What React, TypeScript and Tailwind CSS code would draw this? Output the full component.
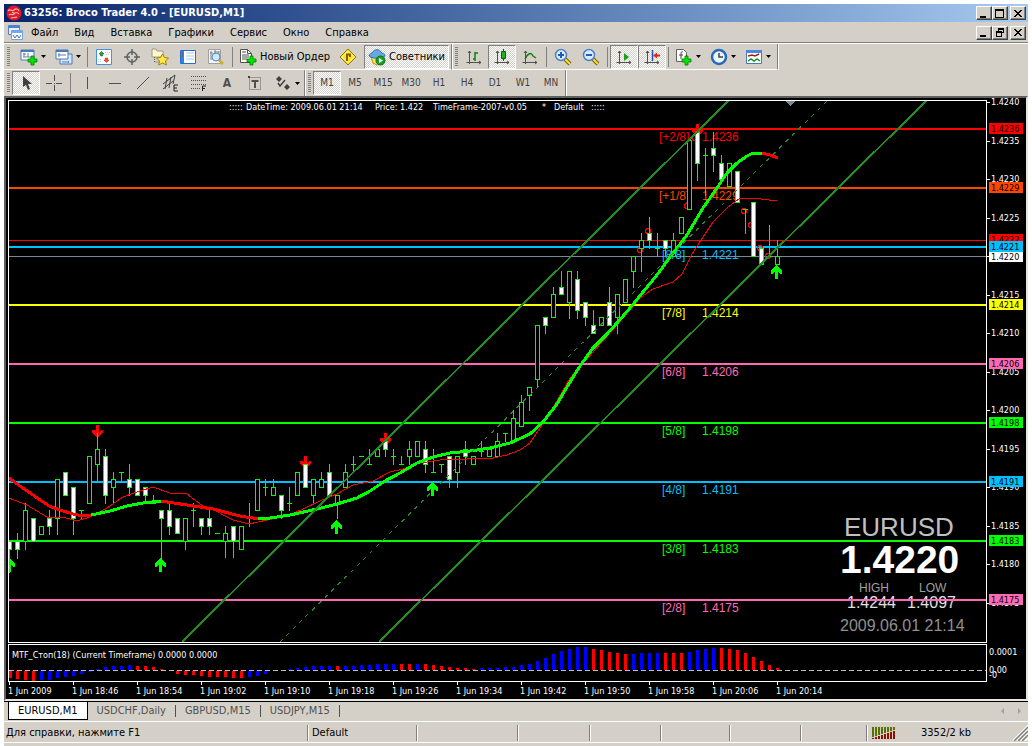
import { ReactNode } from "react"

type Candle = [number, number, number, number, number, 'up' | 'down']

type ButtonProps = {
    label: string
    pressed?: boolean
    menu?: boolean
    wide?: boolean
    children: ReactNode
}

// [index, high, body top, body bottom, low, direction]
const candles: Candle[] = [
    [0, 541, 541, 549, 572, 'down'], [1, 533, 541, 549, 558, 'down'], [2, 503, 510, 541, 549, 'up'],
    [3, 518, 518, 541, 541, 'down'], [4, 526, 526, 534, 534, 'up'], [5, 510, 518, 526, 534, 'down'],
    [6, 479, 479, 518, 534, 'up'], [7, 472, 472, 495, 495, 'down'], [8, 487, 487, 518, 534, 'down'],
    [9, 510, 510, 510, 518, 'up'], [10, 456, 456, 503, 503, 'up'], [11, 433, 449, 464, 480, 'up'],
    [12, 449, 456, 495, 503, 'down'], [13, 472, 479, 487, 503, 'up'], [14, 472, 472, 472, 480, 'up'],
    [15, 464, 479, 487, 495, 'down'], [16, 479, 479, 495, 495, 'down'], [17, 487, 487, 495, 501, 'down'],
    [18, 495, 503, 503, 503, 'up'], [19, 510, 510, 518, 564, 'down'], [20, 503, 510, 526, 534, 'down'],
    [21, 518, 518, 533, 533, 'down'], [22, 518, 518, 541, 549, 'up'], [23, 503, 510, 510, 526, 'up'],
    [24, 518, 518, 526, 534, 'down'], [25, 510, 518, 526, 534, 'down'], [26, 533, 533, 533, 533, 'up'],
    [27, 526, 533, 541, 557, 'up'], [28, 526, 526, 541, 557, 'down'], [29, 526, 526, 549, 549, 'up'],
    [30, 503, 518, 518, 526, 'up'], [31, 479, 479, 510, 510, 'up'], [32, 479, 487, 487, 495, 'up'],
    [33, 479, 487, 495, 495, 'up'], [34, 495, 495, 510, 518, 'down'], [35, 487, 503, 503, 510, 'up'],
    [36, 472, 472, 495, 495, 'up'], [37, 464, 464, 487, 487, 'down'], [38, 479, 479, 495, 503, 'up'],
    [39, 472, 479, 487, 487, 'up'], [40, 464, 472, 495, 495, 'down'], [41, 495, 495, 503, 518, 'up'],
    [42, 464, 472, 487, 487, 'up'], [43, 456, 464, 464, 472, 'up'], [44, 456, 456, 456, 456, 'up'],
    [45, 449, 464, 464, 464, 'up'], [46, 449, 449, 456, 456, 'up'], [47, 441, 441, 449, 456, 'down'],
    [48, 449, 456, 456, 464, 'up'], [49, 456, 464, 464, 464, 'up'], [50, 441, 449, 456, 464, 'up'],
    [51, 441, 441, 456, 456, 'up'], [52, 441, 449, 464, 472, 'down'], [53, 449, 472, 472, 472, 'up'],
    [54, 464, 464, 464, 472, 'up'], [55, 456, 456, 479, 487, 'down'], [56, 456, 456, 472, 487, 'up'],
    [57, 441, 449, 456, 464, 'down'], [58, 456, 456, 464, 464, 'up'], [59, 441, 451, 451, 456, 'up'],
    [60, 449, 449, 456, 456, 'up'], [61, 433, 441, 456, 456, 'up'], [62, 433, 433, 433, 441, 'up'],
    [63, 410, 418, 441, 441, 'up'], [64, 395, 402, 426, 426, 'up'], [65, 387, 387, 395, 410, 'up'],
    [66, 325, 325, 379, 387, 'up'], [67, 317, 317, 325, 333, 'down'], [68, 287, 294, 317, 317, 'up'],
    [69, 271, 287, 294, 294, 'down'], [70, 271, 271, 302, 318, 'up'], [71, 271, 279, 310, 318, 'down'],
    [72, 302, 302, 317, 325, 'down'], [73, 310, 325, 333, 333, 'down'], [74, 317, 317, 325, 325, 'up'],
    [75, 287, 302, 325, 325, 'down'], [76, 294, 294, 317, 333, 'up'], [77, 279, 279, 302, 302, 'up'],
    [78, 256, 256, 271, 287, 'up'], [79, 233, 240, 248, 271, 'up'], [80, 217, 233, 240, 248, 'down'],
    [81, 233, 248, 248, 256, 'up'], [82, 240, 240, 248, 256, 'down'], [83, 233, 240, 256, 256, 'up'],
    [84, 217, 217, 233, 233, 'up'], [85, 140, 140, 209, 209, 'up'], [86, 132, 132, 163, 180, 'down'],
    [87, 148, 155, 155, 195, 'up'], [88, 132, 148, 155, 171, 'down'], [89, 155, 163, 179, 179, 'down'],
    [90, 163, 163, 186, 186, 'up'], [91, 171, 171, 202, 202, 'down'], [92, 209, 209, 209, 233, 'up'],
    [93, 202, 202, 256, 256, 'down'], [94, 248, 248, 264, 264, 'down'], [95, 225, 256, 256, 256, 'up'],
    [96, 240, 256, 264, 264, 'up'],
]

// histogram, grouped in runs of one colour
const histogram: { start: number, color: string, values: number[] }[] = [
    { start: 0, color: '#ff0000', values: [-7, -8, -9, -10] },
    { start: 4, color: '#0000ff', values: [-9, -9, -7, -6, -5, -3, -1, 1, 3, 4, 4, 5] },
    { start: 16, color: '#ff0000', values: [4, 4, 3, 1, 0, -3, -4, -4, -5, -6, -6, -6, -7, -7] },
    { start: 30, color: '#0000ff', values: [-6, -5, -3, 0, 0, 1, 2, 3, 4, 4, 4] },
    { start: 41, color: '#ff0000', values: [4] },
    { start: 42, color: '#0000ff', values: [4, 4, 5, 5, 6, 6, 6] },
    { start: 49, color: '#ff0000', values: [6, 6] },
    { start: 51, color: '#0000ff', values: [6] },
    { start: 52, color: '#ff0000', values: [6, 5, 4, 3, 2, 2, 1] },
    { start: 59, color: '#0000ff', values: [2, 2, 2, 3, 3, 5, 6, 9, 12, 16, 19, 21, 23, 23] },
    { start: 73, color: '#ff0000', values: [21, 20, 18, 17, 16] },
    { start: 78, color: '#0000ff', values: [16, 17, 17, 17] },
    { start: 82, color: '#ff0000', values: [17, 17, 17] },
    { start: 85, color: '#0000ff', values: [18, 20, 21, 22] },
    { start: 89, color: '#ff0000', values: [22, 21, 20, 17, 13, 9, 5, 2] },
]

const levels = [
    { y: 129, name: '[+2/8]', price: '1.4236', color: '#ff0000' },
    { y: 188, name: '[+1/8]', price: '1.4229', color: '#ff4500' },
    { y: 247, name: '[8/8]', price: '1.4221', color: '#00bfff' },
    { y: 305, name: '[7/8]', price: '1.4214', color: '#ffff00' },
    { y: 364, name: '[6/8]', price: '1.4206', color: '#ff69b4' },
    { y: 423, name: '[5/8]', price: '1.4198', color: '#00ff00' },
    { y: 482, name: '[4/8]', price: '1.4191', color: '#00bfff' },
    { y: 541, name: '[3/8]', price: '1.4183', color: '#00ff00' },
    { y: 600, name: '[2/8]', price: '1.4175', color: '#ff69b4' },
]

const prices = ['1.4240', '1.4235', '1.4230', '1.4225', '1.4220', '1.4215', '1.4210', '1.4205', '1.4200', '1.4195', '1.4190', '1.4185', '1.4180', '1.4175']

const times = ['2009', '18:46', '18:54', '19:02', '19:10', '19:18', '19:26', '19:34', '19:42', '19:50', '19:58', '20:06', '20:14']

const menuItems = ['Файл', 'Вид', 'Вставка', 'Графики', 'Сервис', 'Окно', 'Справка']
const timeframes = ['M1', 'M5', 'M15', 'M30', 'H1', 'H4', 'D1', 'W1', 'MN']
const tabs = ['EURUSD,M1', 'USDCHF,Daily', 'GBPUSD,M15', 'USDJPY,M15']

const circles = [[648, 231], [640, 250], [744, 211], [751, 225], [687, 206], [760, 248], [768, 256], [695, 138]]

function Grip() {
    return <div className="mx-[2px] h-5 w-[3px] shrink-0 bg-[repeating-linear-gradient(#808080_0_1px,#d4d0c8_1px_2px)]" />
}

function Separator() {
    return <div className="mx-[2px] h-5 w-px shrink-0 bg-[#808080]" />
}

function ToolButton({ label, pressed = false, menu = false, wide = false, children }: ButtonProps) {
    const width = wide ? 'px-[3px]' : menu ? 'w-[35px]' : 'w-7'
    const look = pressed
        ? 'border-t-[#808080] border-l-[#808080] border-r-white border-b-white bg-[conic-gradient(#fff_25%,#d4d0c8_0_50%,#fff_0_75%,#d4d0c8_0)] bg-[length:2px_2px]'
        : 'border-transparent'
    return (
        <button type="button" aria-label={label} className={`flex h-6 shrink-0 items-center justify-center gap-[3px] border whitespace-nowrap ${width} ${look}`}>
            {children}
            {menu && <svg width="5" height="3" viewBox="0 0 5 3"><path d="M0 0h5L2.5 3z" fill="#000" /></svg>}
        </button>
    )
}

function Icon({ children }: { children: ReactNode }) {
    return <svg width="18" height="18" viewBox="0 0 18 18" fill="none" className="shrink-0">{children}</svg>
}

function Plus({ x, y }: { x: number, y: number }) {
    return <path transform={`translate(${x} ${y})`} d="M3 0h3v3h3v3H6v3H3V6H0V3h3z" fill="#00e800" stroke="#007800" strokeWidth=".8" />
}

function Axes() {
    return <path d="M4.500 3v13M1.500 14.500H16M3 5l1.500-2L6 5M14 13l2 1.500-2 1.500" stroke="#505050" />
}

function Magnifier({ sign }: { sign: string }) {
    return (
        <Icon>
            <path d="M11 11l5 5" stroke="#806000" strokeWidth="4" />
            <path d="M11 11l5 5" stroke="#f0e040" strokeWidth="2" />
            <circle cx="7" cy="7" r="5.500" fill="#d8ecff" stroke="#5080c8" strokeWidth="1.500" />
            <path d={sign} stroke="#2858b0" strokeWidth="2" />
        </Icon>
    )
}

function CaptionButton({ label, children }: { label: string, children: ReactNode }) {
    return (
        <button type="button" aria-label={label} className="flex h-[14px] w-4 items-center justify-center border border-t-white border-l-white border-r-[#404040] border-b-[#404040] bg-[#d4d0c8] shadow-[inset_-1px_-1px_#808080]">
            <svg width="10" height="9" viewBox="0 0 10 9" fill="none" shapeRendering="crispEdges">{children}</svg>
        </button>
    )
}

function CaptionButtons({ restore = false }: { restore?: boolean }) {
    return (
        <div className="ml-auto flex pr-[2px]">
            <CaptionButton label="Minimize"><path d="M1 7h6v2H1z" fill="#000" /></CaptionButton>
            <CaptionButton label="Maximize">
                {restore
                    ? <path d="M3.500 3V.500h5v4H7M3 1h6M1.500 3.500h5v5h-5zM1 4h6" stroke="#000" />
                    : <path d="M.500.500h8v8h-8zM0 1.500h9" stroke="#000" />}
            </CaptionButton>
            <div className="w-[2px]" />
            <CaptionButton label="Close"><path d="M1 1l7 7M8 1L1 8M2 1l7 7M9 1L2 8" stroke="#000" /></CaptionButton>
        </div>
    )
}

function TitleBar() {
    return (
        <header className="flex h-[18px] items-center bg-linear-to-r from-[#0a246a] to-[#a6caf0] pl-[2px] text-white">
            <svg width="16" height="16" viewBox="0 0 16 16" fill="none">
                <circle cx="8" cy="8" r="7.500" fill="#e01828" />
                <path d="M2 6c2-3 4 1 6-1s4-1 5 1M3 10c2-2 4 1 5-1s3-2 5 0M5 13c2-1 4 0 6-1M6 7l3 2" stroke="#ffb0b0" strokeWidth="1.200" />
            </svg>
            <h1 className="pl-[2px] leading-4 font-bold whitespace-nowrap">63256: Broco Trader 4.0 - [EURUSD,M1]</h1>
            <CaptionButtons />
        </header>
    )
}

function MenuBar() {
    return (
        <nav className="flex h-[22px] items-center border-b border-b-white pl-1 shadow-[inset_0_-1px_#808080]">
            <svg width="15" height="16" viewBox="0 0 15 16" fill="none">
                <path d="M.500.500h11v9H.500z" fill="#e8f0ff" stroke="#5080d0" />
                <path d="M1 2h10" stroke="#5080d0" strokeWidth="2" />
                <path d="M3.500 5.500h11v9h-11z" fill="#fff" stroke="#78a0e0" />
                <path d="M4 7h10" stroke="#78a8e8" strokeWidth="2" />
                <path d="M5 10l2 3 2-3 2 3 2-3" stroke="#4070c8" />
            </svg>
            {menuItems.map(item => (
                <button key={item} type="button" className="px-2 whitespace-nowrap">{item}</button>
            ))}
            <CaptionButtons restore />
        </nav>
    )
}

function MainToolbar() {
    return (
        <div className="flex h-[26px]">
            <div className="flex items-center border-r border-b border-r-[#808080] border-b-white pl-px">
                <Grip />
                <div className="w-[3px]" />
                <ToolButton label="New chart" menu>
                    <Icon>
                        <path d="M1 2h13v10H1z" fill="#fff" stroke="#4878b8" />
                        <path d="M1 3h13" stroke="#4878b8" strokeWidth="2" />
                        <path d="M4 5v4M3 6h3M8 5v4M3 9h8" stroke="#6080a0" />
                        <Plus x={8} y={8} />
                    </Icon>
                </ToolButton>
                <ToolButton label="Profiles" menu>
                    <Icon>
                        <path d="M5 6h12v10H5z" fill="#d8e8ff" stroke="#4878b8" />
                        <path d="M1 2h12v9H1z" fill="#fff" stroke="#4878b8" />
                        <path d="M1 3h12" stroke="#4878b8" strokeWidth="2" />
                        <path d="M4 5v4M3 7h8M7 14h7M13 13l1 1-1 1" stroke="#6080a0" />
                    </Icon>
                </ToolButton>
                <Separator />
                <ToolButton label="Market watch">
                    <Icon>
                        <path d="M1.500 1.500h15v15h-15z" fill="#fff" stroke="#4890e0" />
                        <path d="M10 4.500h5M11 6.500h4M3 11.500h4M3 13.500h4" stroke="#b0ccf0" strokeDasharray="1 1" />
                        <path d="M6.500 3.500l2.500 2.500H7.500v2h-2V6H4z" fill="#20a030" stroke="#107020" strokeWidth=".6" />
                        <path d="M11.500 14.500L9 12h1.500v-2h2v2H14z" fill="#f06030" stroke="#c02010" strokeWidth=".6" />
                    </Icon>
                </ToolButton>
                <ToolButton label="Data window">
                    <Icon>
                        <circle cx="9" cy="9" r="5" stroke="#606060" strokeWidth="1.500" />
                        <path d="M9 1v6M9 11v6M1 9h6M11 9h6" stroke="#606060" strokeWidth="1.500" />
                    </Icon>
                </ToolButton>
                <ToolButton label="Navigator">
                    <Icon>
                        <path d="M1 1h4l1 2h6v6H1z" fill="#fff8d0" stroke="#a09880" />
                        <path d="M3.500 9v5H8" stroke="#606060" strokeDasharray="1 1" />
                        <path d="M11.500 6l2 3.500 4 .5-3 3 .8 4-3.800-2-3.800 2 .8-4-3-3 4-.5z" fill="#ffe840" stroke="#a08010" />
                    </Icon>
                </ToolButton>
                <ToolButton label="Terminal">
                    <Icon>
                        <path d="M1.500 2.500h15v13h-15z" fill="#fff" stroke="#2070d0" />
                        <path d="M2 3h3v12H2z" fill="#3080e0" />
                        <path d="M3 5h1M3 8h1" stroke="#e02020" />
                        <path d="M7 5h8M7 8h8M7 11h8" stroke="#a8c8f0" />
                    </Icon>
                </ToolButton>
                <ToolButton label="Strategy tester">
                    <Icon>
                        <path d="M1.500 1.500h12v14h-12z" fill="#f4f4f4" stroke="#a0a0a0" />
                        <path d="M4 3v9M3 5h3M8 2v5M7 4h5M12 3v4" stroke="#808080" />
                        <path d="M12 12l4 4" stroke="#d0b020" strokeWidth="2.500" />
                        <circle cx="9" cy="9" r="4" fill="#c8e4ff" fillOpacity=".8" stroke="#5088c8" />
                    </Icon>
                </ToolButton>
                <Separator />
                <ToolButton label="Новый Ордер" wide>
                    <Icon>
                        <path d="M1.500 1.500h7l4 4v9h-11z" fill="#fff" stroke="#505050" />
                        <path d="M8.500 1.500v4h4M3 4h4M3 7h7M3 9h7M3 11h5" stroke="#505050" />
                        <Plus x={8} y={8} />
                    </Icon>
                    <span>Новый Ордер</span>
                </ToolButton>
                <ToolButton label="MetaEditor">
                    <Icon>
                        <path d="M9 1l8 8-8 8-8-8z" fill="#ffe020" stroke="#907800" />
                        <path d="M9 3l6 6-6 6-6-6z" stroke="#fff8a0" />
                        <path d="M8 13V6.500h3V9" stroke="#806000" strokeWidth="2" />
                    </Icon>
                </ToolButton>
                <div className="w-[2px]" />
                <ToolButton label="Советники" wide pressed>
                    <Icon>
                        <path d="M3 9h12l-2 6-4 2-4-2z" fill="#f8e050" stroke="#b09020" />
                        <path d="M1 8c0-3 3-2 4-4 1-3 7-3 8 0 1 2 4 1 4 4-4 3-12 3-16 0z" fill="#68a8e0" stroke="#3070b0" />
                        <circle cx="12.500" cy="12.500" r="4.500" fill="#18a028" stroke="#087018" />
                        <path d="M11 10l4 2.500-4 2.500z" fill="#fff" />
                    </Icon>
                    <span>Советники</span>
                </ToolButton>
                <div className="w-[2px]" />
            </div>
            <div className="flex items-center border-r border-b border-l border-r-[#808080] border-b-white border-l-white pr-px">
                <Grip />
                <ToolButton label="Bar chart"><Icon><Axes /><path d="M10 4v9M8 11h2M10 5h3" stroke="#108010" strokeWidth="1.500" /></Icon></ToolButton>
                <ToolButton label="Candlesticks" pressed>
                    <Icon><Axes /><path d="M10.500 1v12" stroke="#086008" /><path d="M8.500 3.500h4v7h-4z" fill="#20b020" stroke="#086008" /></Icon>
                </ToolButton>
                <ToolButton label="Line chart"><Icon><Axes /><path d="M4 11c3-6 6-7 8-3l3 2" stroke="#108010" strokeWidth="1.500" /></Icon></ToolButton>
                <Separator />
                <ToolButton label="Zoom in"><Magnifier sign="M4 7h6M7 4v6" /></ToolButton>
                <ToolButton label="Zoom out"><Magnifier sign="M4 7h6" /></ToolButton>
                <Separator />
                <ToolButton label="Auto scroll" pressed><Icon><Axes /><path d="M9 5l5 4-5 4z" fill="#18a018" /></Icon></ToolButton>
                <ToolButton label="Chart shift" pressed>
                    <Icon><Axes /><path d="M9.500 2v11" stroke="#2050c0" strokeWidth="1.500" /><path d="M10 7.500l4-3v2h3v2h-3v2z" fill="#e02810" /></Icon>
                </ToolButton>
                <Separator />
                <ToolButton label="Indicators" menu>
                    <Icon>
                        <path d="M1.500 1.500h7l3 3v9h-10z" fill="#fff" stroke="#606060" />
                        <path d="M8 4c-2-1-2 1-2 3v4M4 7h4" stroke="#404040" />
                        <Plus x={7} y={8} />
                    </Icon>
                </ToolButton>
                <ToolButton label="Periods" menu>
                    <Icon>
                        <circle cx="9" cy="9" r="7" fill="#e8f4ff" stroke="#2868b8" strokeWidth="2.500" />
                        <path d="M9 5v4h4" stroke="#404040" strokeWidth="1.500" />
                    </Icon>
                </ToolButton>
                <ToolButton label="Templates" menu>
                    <Icon>
                        <path d="M1.500 2.500h15v13h-15z" fill="#fff" stroke="#4878b8" />
                        <path d="M1 3.500h16" stroke="#4888e0" strokeWidth="3" />
                        <path d="M3 8l4-1 3 1 4-2" stroke="#a02020" strokeWidth="1.500" />
                        <path d="M3 13l3-2 3 2 3-2 3 2" stroke="#209020" strokeWidth="1.500" />
                    </Icon>
                </ToolButton>
            </div>
            <div className="w-px bg-white" />
        </div>
    )
}

function LineToolbar() {
    return (
        <div className="flex h-[26px] text-[10px] text-[#404040]">
            <div className="flex items-center border-r border-r-[#808080] pl-px">
                <Grip />
                <ToolButton label="Cursor" pressed><Icon><path d="M6 2v11l3-2 2 5 2-1-2-5h4z" fill="#404040" /></Icon></ToolButton>
                <ToolButton label="Crosshair"><Icon><path d="M9.500 1v6M9.500 11v6M1 9.500h6M11 9.500h6M9 9.500h1" stroke="#505050" /></Icon></ToolButton>
                <Separator />
                <ToolButton label="Vertical line"><Icon><path d="M9.500 3v12" stroke="#505050" /></Icon></ToolButton>
                <ToolButton label="Horizontal line"><Icon><path d="M3 9.500h12" stroke="#505050" /></Icon></ToolButton>
                <ToolButton label="Trendline"><Icon><path d="M3 15L15 3" stroke="#505050" /></Icon></ToolButton>
                <ToolButton label="Equidistant channel">
                    <Icon>
                        <path d="M1 10L13 1M1 15L11 7M5 4L3 15M9 3L7 14M13 1l-2 9" stroke="#404040" />
                        <path d="M16 11h-4v6h4M12 14h3" stroke="#202020" />
                    </Icon>
                </ToolButton>
                <ToolButton label="Fibonacci">
                    <Icon>
                        <path d="M1 2.500h15M1 6.500h15M1 10.500h15M1 14.500h9" stroke="#505050" strokeDasharray="1 1" />
                        <path d="M12.500 17v-5H16M12 14.500h3" stroke="#202020" />
                    </Icon>
                </ToolButton>
                <ToolButton label="Text"><span className="text-[12px] font-bold text-[#505050]">A</span></ToolButton>
                <ToolButton label="Text label">
                    <Icon>
                        <path d="M3.500 3.500h11v12h-11z" stroke="#606060" strokeDasharray="1 1" />
                        <path d="M2 2h2v2H2z" fill="#404040" />
                        <path d="M5.500 7h7M9 7v7" stroke="#505050" strokeWidth="2" />
                    </Icon>
                </ToolButton>
                <ToolButton label="Arrows" menu>
                    <Icon>
                        <path d="M2 5l3-3 3 3-3 3zM10 13l3-3 3 3-3 3z" fill="#404040" />
                        <path d="M4 9l2 3 5-6" stroke="#404040" strokeWidth="1.500" />
                    </Icon>
                </ToolButton>
            </div>
            <div className="flex items-center border-r border-l border-r-[#808080] border-l-white">
                <Grip />
                {timeframes.map(frame => (
                    <ToolButton key={frame} label={frame} pressed={frame === 'M1'}>{frame}</ToolButton>
                ))}
            </div>
            <div className="w-px bg-white" />
        </div>
    )
}

function CandleShape({ candle }: { candle: Candle }) {
    const [index, high, top, bottom, low, direction] = candle
    const x = 9 + index * 8
    return (
        <g stroke="#00ff00">
            {low > high && <path d={`M${x + 0.5} ${high}V${low + 1}`} />}
            {bottom > top
                ? <rect x={x - 1.5} y={top + 0.5} width="4" height={bottom - top} fill={direction === 'up' ? '#000' : '#fff'} />
                : <path d={`M${x - 2} ${top + 0.5}h5`} />}
        </g>
    )
}

function DownArrow({ x, y }: { x: number, y: number }) {
    return <path transform={`translate(${x} ${y})`} d="M-1 0h3v7l2-2h2v2l-5 6h-1l-5-6v-2h2l2 2z" fill="#ff0000" />
}

function UpArrow({ x, y }: { x: number, y: number }) {
    return <path transform={`translate(${x} ${y})`} d="M0 0h1l5 6v3h-2l-2-3v8h-3v-8l-2 3h-2v-3z" fill="#00ff00" />
}

function Chart() {
    return (
        <svg viewBox="6 98 1020 601" className="block w-full bg-black" fill="none" shapeRendering="crispEdges" fontSize="9">
            <clipPath id="plot"><path d="M9 101h977v541H9z" /></clipPath>

            <g clipPath="url(#plot)">
                <path d="M785 101h10l-5 5z" fill="#778899" />
                <g fontFamily="Liberation Sans, sans-serif">
                    <text x="844" y="536" fontSize="26" fill="#c0c0c0">EURUSD</text>
                    <text x="840" y="573" fontSize="39" fontWeight="bold" fill="#fff">1.4220</text>
                    <text x="859" y="592" fontSize="12" fill="#a0a0a0">HIGH</text>
                    <text x="919" y="592" fontSize="12" fill="#a0a0a0">LOW</text>
                    <text x="847" y="608" fontSize="16" fill="#e0e0e0">1.4244</text>
                    <text x="907" y="608" fontSize="16" fill="#e0e0e0">1.4097</text>
                    <text x="840" y="631" fontSize="16" fill="#909090">2009.06.01 21:14</text>
                </g>
                {levels.map(level => (
                    <path key={level.y} d={`M9 ${level.y}H986`} stroke={level.color} strokeWidth="2" />
                ))}
                <path d="M9 240.500H986" stroke="#ff0000" />
                <path d="M9 256.500H986" stroke="#778899" />
                <g fontFamily="Liberation Sans, sans-serif" fontSize="12">
                    {levels.map(level => (
                        <g key={level.y} fill={level.color}>
                            <text x={level.name.length > 5 ? 659 : 662} y={level.y + 12}>{level.name}</text>
                            <text x="702" y={level.y + 12}>{level.price}</text>
                        </g>
                    ))}
                </g>
                {circles.map(([x, y]) => (
                    <circle key={x} cx={x} cy={y} r="2.500" stroke="#ff0000" strokeWidth="1.500" />
                ))}
                <DownArrow x={97} y={425} />
                <DownArrow x={305} y={456} />
                <DownArrow x={385} y={433} />
                <DownArrow x={697} y={124} />
                {candles.map(candle => <CandleShape key={candle[0]} candle={candle} />)}
                <path stroke="#ff0000" d="M9 498L27 505 47 517 63 517 73 520 80 520 90 517 107 508 123 497 137 492 153 487 170 493 187 494 203 506 213 509 223 515 233 520 249 524 267 520 287 516 303 509 320 501 337 494 353 485 373 481 390 472 403 469 420 463 440 460 467 459 493 458 507 455 520 450 530 443 540 428 550 413 570 378 593 352 617 325 640 298 653 289 673 282 682 274 692 254 703 237 713 222 727 208 740 198 753 198 777 201" />
                <g strokeWidth="3">
                    <path stroke="#ff0000" d="M9 478L20 486 33 495 49 506 60 510 73 514 83 516 91 515" />
                    <path stroke="#00ff00" d="M91 515L110 511 127 506 143 503 161 501" />
                    <path stroke="#ff0000" d="M161 501L187 505 213 509 240 516 259 519" />
                    <path stroke="#00ff00" d="M258 519L270 518 290 515 317 509 337 504 357 498 370 491 385 481 400 473 417 463 433 457 450 453 470 451 490 448 510 443 530 434 543 422 557 404 567 387 580 366 593 348 607 334 617 323 630 308 643 292 657 275 670 257 687 235 703 208 717 188 727 173 737 163 747 156 753 153 762 153" />
                    <path stroke="#ff0000" d="M762 153L770 155 778 158" />
                </g>
                <path d="M182 642L728 101M379 642L926 101" stroke="#228b22" strokeWidth="2" />
                <path d="M280 642L827 101" stroke="#228b22" strokeDasharray="4 5" />
                <UpArrow x={9} y={558} />
                <UpArrow x={160} y={558} />
                <UpArrow x={336} y={520} />
                <UpArrow x={432} y={482} />
                <UpArrow x={776} y={265} />
                <g fill="#fff">
                    <text x="229" y="110">:::::</text>
                    <text x="246" y="110">DateTime: 2009.06.01 21:14</text>
                    <text x="375" y="110">Price: 1.422</text>
                    <text x="433" y="110">TimeFrame-2007-v0.05</text>
                    <text x="542" y="110">*</text>
                    <text x="554" y="110">Default</text>
                    <text x="591" y="110">:::::</text>
                </g>
            </g>

            <text x="12" y="658" fill="#fff">MTF_Стоп(18) (Current Timeframe) 0.0000 0.0000</text>
            {histogram.map(run => run.values.map((value, i) => (
                <rect
                    key={run.start + i}
                    x={Math.max(9, 8 + (run.start + i) * 8)}
                    y={value > 0 ? 670 - value : 671}
                    width="3"
                    height={Math.abs(value)}
                    fill={run.color}
                />
            )))}
            <path d="M9 670.500H986" stroke="#c0c0c0" strokeDasharray="5 3" />

            <path d="M8.500 100.500h978v542h-978zM8.500 644.500h978v37h-978z" stroke="#fff" />

            <g fill="#fff">
                {prices.map((price, i) => (
                    <g key={price}>
                        <path d={`M987 ${Math.round(102 + i * 38.5)}.5h3`} stroke="#fff" />
                        <text x="991" y={Math.round(105 + i * 38.5)}>{price}</text>
                    </g>
                ))}
                <text x="989" y="655">0.0001</text>
                <text x="989" y="673">0.00</text>
                <text x="989" y="678">-0</text>
                {times.map((time, i) => (
                    <g key={time}>
                        <path d={`M${9.5 + i * 64} 682v3`} stroke="#fff" />
                        <text x={8 + i * 64} y="694">1 Jun {time}</text>
                    </g>
                ))}
            </g>

            <path d="M989 234h34v11h-34z" fill="#ff0000" />
            <text x="991" y="243" fill="#000">1.4222</text>
            <path d="M989 251h34v11h-34z" fill="#fff" />
            <text x="991" y="260" fill="#000">1.4220</text>
            {levels.map(level => (
                <g key={level.y}>
                    <rect x="989" y={level.y - 6} width="34" height="11" fill={level.color} />
                    <text x="991" y={level.y + 3} fill="#000">{level.price}</text>
                </g>
            ))}
        </svg>
    )
}

function Tabs() {
    return (
        <div className="flex h-5 items-start border-t border-black pl-1">
            {tabs.map((tab, i) => (
                <div key={tab} className="flex items-center">
                    <button
                        type="button"
                        className={i === 0
                            ? 'h-[18px] border-r border-b border-l border-black bg-white px-[9px] leading-4 whitespace-nowrap'
                            : 'h-[18px] px-[9px] leading-4 whitespace-nowrap text-[#505050]'}
                    >
                        {tab}
                    </button>
                    {i > 0 && <div className="h-3 w-px bg-[#505050]" />}
                </div>
            ))}
            <svg width="24" height="8" viewBox="0 0 24 8" className="mt-[5px] mr-[5px] ml-auto">
                <path d="M5 1v6L2 4zM19 1v6l3-3z" fill="#a0a0a0" />
            </svg>
        </div>
    )
}

function StatusBar() {
    const cell = 'h-4 shrink-0 border-l border-[#808080] shadow-[inset_1px_0_#fff]'
    return (
        <footer className="flex h-[22px] items-center border-t border-b border-white pt-[2px] pl-[2px]">
            <div className="flex-1 truncate">Для справки, нажмите F1</div>
            <div className={`${cell} w-[109px] pl-1 leading-4`}>Default</div>
            <div className={`${cell} w-[101px]`} />
            <div className={`${cell} w-[72px]`} />
            <div className={`${cell} w-[71px]`} />
            <div className={`${cell} w-[69px]`} />
            <div className={`${cell} w-[71px]`} />
            <div className={`${cell} w-[66px]`} />
            <div className={`${cell} flex w-[162px] items-center pl-[5px] leading-4`}>
                <svg width="24" height="12" viewBox="0 0 24 12" shapeRendering="crispEdges">
                    {[0, 1, 2, 3, 4, 5, 6, 7].map(i => (
                        <g key={i}>
                            <rect x={i * 3} y="0" width="2" height={10 - i} fill="#587000" />
                            <rect x={i * 3} y={11 - i} width="2" height={i + 1} fill="#901000" />
                        </g>
                    ))}
                </svg>
                <span className="pl-[25px]">3352/2 kb</span>
                <svg width="16" height="16" viewBox="0 0 16 16" className="ml-auto" fill="none">
                    <path d="M1 16L16 1M5 16L16 5M9 16l7-7M13 16l3-3" stroke="#fff" strokeWidth="2" />
                    <path d="M2 16L16 2M6 16L16 6M10 16l6-6" stroke="#808080" strokeWidth="1.500" />
                </svg>
            </div>
        </footer>
    )
}

export default function App() {
    return (
        <div className="overflow-hidden bg-white px-1 pt-1 font-['DejaVu_Sans_Condensed','DejaVu_Sans',sans-serif] text-[11px] leading-4 text-black">
            <div className="bg-[#d4d0c8] pb-[3px]">
                <TitleBar />
                <MenuBar />
                <MainToolbar />
                <LineToolbar />
                <main className="border-2 border-t-[#606060] border-r-[#e8e6e0] border-b-[#e8e6e0] border-l-[#606060]">
                    <Chart />
                </main>
                <Tabs />
                <StatusBar />
            </div>
        </div>
    )
}
